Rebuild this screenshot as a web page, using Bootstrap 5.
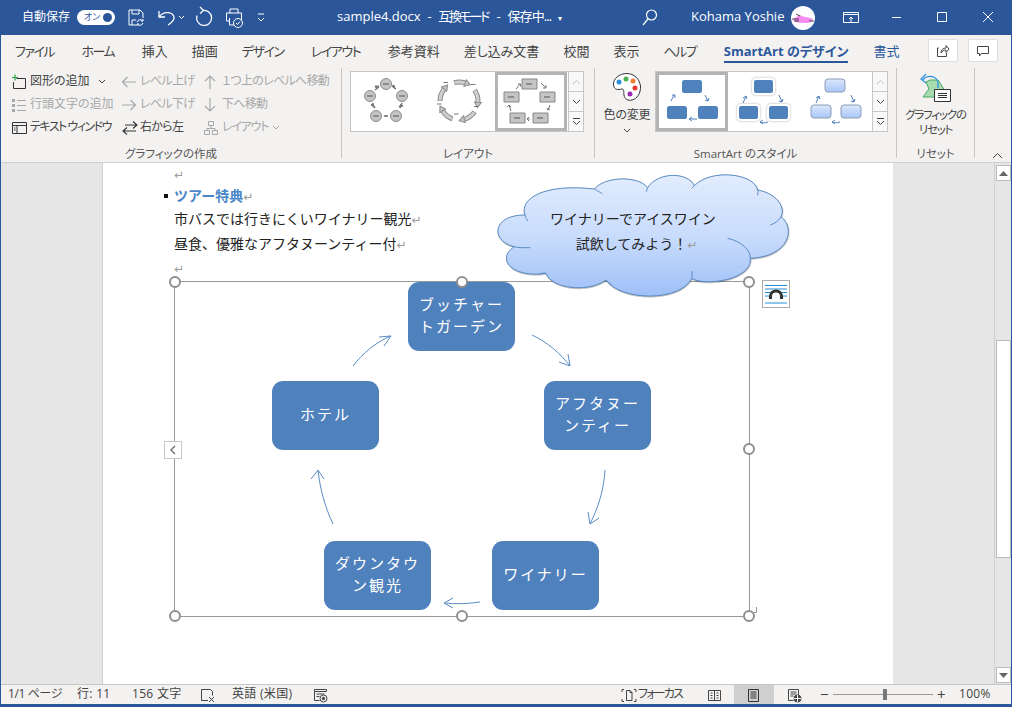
<!DOCTYPE html>
<html lang="ja">
<head>
  <meta charset="UTF-8" />
  <title>sample4.docx - Word</title>
  <link href="https://cdn.jsdelivr.net/npm/bootstrap@5.3.2/dist/css/bootstrap.min.css" rel="stylesheet">
  <style>
    html, body { height: 100%; overflow: hidden; }
    body { font-family: "Open Sans", "Noto Sans CJK JP", sans-serif; font-size: 12px; color: #444; background: #f3f2f1; font-feature-settings: "palt"; line-height: 1.2; }
    svg { display: block; flex: none; }
    .app-win { width: 1012px; height: 707px; border: solid #2b579a; border-width: 0 1px 3px 1px; }
    .kana-tight { letter-spacing: -.7px; }

    .title-bar { height: 35px; background: #2b579a; color: #fff; margin: 0 -1px; position: relative; }
    .autosave { margin-left: 22px; width: 55px; }
    .toggle-pill { width: 38px; height: 15px; border-radius: 8px; background: #fff; color: #2b579a; font-size: 9px; padding: 0 3px 0 7px; }
    .toggle-dot { width: 9px; height: 9px; border-radius: 50%; background: #2b579a; }
    .doc-title { position: absolute; left: 337px; top: 9px; font-size: 13px; white-space: nowrap; }
    .doc-title .title-mode { letter-spacing: -2.400px; margin-right: 2px; }
    .doc-title .title-jp { letter-spacing: -.9px; }
    .user-name { position: absolute; left: 691px; top: 9px; font-size: 13px; }
    .avatar { position: absolute; left: 791px; top: 6px; }
    .win-btn { position: absolute; top: 0; }

    .tab-row { height: 33px; padding-left: 14px; font-size: 13px; position: relative; color: #444; }
    .tab-item { margin-right: 24px; padding-top: 9px; white-space: nowrap; }
    .tab-kana { letter-spacing: -1.5px; margin-right: 27.5px; }
    .tab-active { color: #2b579a; font-weight: 700; height: 28px; border-bottom: 2px solid #2b579a; margin-right: 25px; }
    .tab-blue { color: #2b579a; }
    .top-btn { position: absolute; top: 4px; width: 30px; height: 23px; background: #fff; border: 1px solid #e1dfdd; border-radius: 2px; }

    .ribbon { height: 95px; border-bottom: 1px solid #d2d0ce; }
    .rb-group { height: 93px; position: relative; flex: none; }
    .rb-label { position: absolute; bottom: 0; left: 0; right: 0; text-align: center; font-size: 11.5px; color: #555; }
    .rb-sep { width: 1px; height: 90px; background: #c8c6c4; flex: none; }
    .cmd-row { height: 23px; white-space: nowrap; }
    .cmd-off { color: #a8a8a8; }
    .cmd-icon { width: 18px; margin-right: 1px; }
    .gallery { height: 61px; border: 1px solid #c6c6c6; background: #fff; position: absolute; top: 3px; }
    .gal-item { width: 72px; height: 59px; }
    .gal-on { border: 3px solid #b4b4b4; }
    .gal-scroll { width: 15px; border-left: 1px solid #c6c6c6; background: #f8f8f8; }
    .gal-btn { flex: 1 1 0; border-bottom: 1px solid #c6c6c6; }
    .gal-btn:last-child { border-bottom: 0; }

    .doc-area { height: 521px; background: #e6e6e6; }
    .doc-page { width: 791px; height: 521px; margin-left: 101px; background: #fff; border-left: 1px solid #d0d0d0; position: relative; padding-left: 71px; overflow: hidden; font-size: 14px; color: #222; font-feature-settings: normal; }
    .doc-line { line-height: 24.5px; white-space: nowrap; }
    .doc-first { height: 21px; line-height: 21px; }
    .doc-head-line { height: 23px; }
    .doc-body-line { height: 25px; }
    .doc-last { height: 24px; line-height: 21px; }
    .para-mark { color: #9a9a9a; font-family: "DejaVu Sans", sans-serif; font-size: 12px; }
    .doc-head { color: #4a86c8; font-weight: 700; }
    .doc-bullet { display: inline-block; width: 4px; height: 4px; background: #111; margin-left: -10px; margin-right: 6px; vertical-align: 3px; }

    .art-frame { width: 576px; height: 336px; border: 1px solid #999; position: relative; }
    .art-node { position: absolute; width: 107px; height: 69px; background: #4f81bd; border-radius: 11px; color: #fff; font-size: 15px; letter-spacing: 2px; line-height: 22px; text-align: center; padding: 0 8px 4px; }
    .art-arrows { position: absolute; left: -1px; top: -1px; }
    .art-handle { position: absolute; width: 12px; height: 12px; border-radius: 50%; background: #fff; border: 2px solid #8f8f8f; transform: translate(-50%, -50%); }
    .art-collapse { position: absolute; left: -11px; top: 159px; width: 18px; height: 18px; border: 1px solid #c8c8c8; background: #fff; }
    .art-end-mark { position: absolute; left: 575px; top: 325px; }
    .wrap-opt { position: absolute; left: 587px; top: -2px; width: 28px; height: 28px; border: 1px solid #aaa; background: #fff; }
    .cloud-box { position: absolute; left: 378px; top: 2px; width: 340px; height: 190px; }
    .cloud-text { position: absolute; left: 0; top: 42px; width: 304px; text-align: center; line-height: 24.5px; color: #222; }
    .cloud-second { margin-left: 7px; }

    .v-scroll { width: 17px; margin-left: 101px; background: #e6e6e6; border-left: 1px solid #d0d0d0; position: relative; }
    .v-btn { position: absolute; left: 1px; width: 15px; height: 16px; background: #fff; border: 1px solid #bbb; }
    .v-thumb { position: absolute; left: 1px; top: 177px; width: 15px; height: 218px; background: #fff; border: 1px solid #bbb; }

    .status-bar { height: 20px; border-top: 1px solid #c8c6c4; position: relative; color: #444; }
    .st-item { position: absolute; top: 2px; white-space: nowrap; }
    .st-wide { letter-spacing: .3px; }
    .st-big { font-size: 15px; top: 0; }
    .st-on { position: absolute; left: 733px; top: 0; width: 40px; height: 19px; background: #cfcfcf; }
    .zoom-track { position: absolute; left: 832px; top: 9px; width: 100px; height: 1px; background: #999; }
    .zoom-thumb { position: absolute; left: 882px; top: 4px; width: 4px; height: 11px; background: #777; }
  </style>
</head>
<body>
<div class="app-win d-flex flex-column">

  <!-- title bar -->
  <div class="title-bar d-flex align-items-center">
    <span class="autosave">自動保存</span>
    <div class="toggle-pill d-flex align-items-center justify-content-between"><span>オン</span><span class="toggle-dot"></span></div>
    <svg class="win-btn" style="left:127px" width="18" height="35" fill="none" stroke="#fff"><path d="M2 10h11l3 3v5M2 10v15h7M5 10v4h7v-4M5 25v-5h4"/><path d="M10 22a3.500 3.500 0 0 1 6-1M16 23a3.500 3.500 0 0 1-6 1M16 19v2h-2M10 26v-2h2"/></svg>
    <svg class="win-btn" style="left:157px" width="28" height="35" fill="none" stroke="#fff" stroke-width="1.300"><path d="M2 11v6h6M2 17c5-7 15-5 15 1 0 3-3 5-6 7"/><path d="M22 16l2.500 2.500 2.500-2.500" stroke-width="1"/></svg>
    <svg class="win-btn" style="left:195px" width="18" height="35" fill="none" stroke="#fff" stroke-width="1.300"><path d="M8 10.500A7.500 7.500 0 1 1 2 15.500M5 7l3.500 3.500-3.500 3"/></svg>
    <svg class="win-btn" style="left:225px" width="19" height="35" fill="none" stroke="#fff"><path d="M5 13V9h8v4M1.500 13h15v8h-3M1.500 13v8h3M4.500 18v7h5"/><circle cx="13" cy="23" r="4.500" fill="#2b579a"/><path d="M11 23l1.500 1.500 2.500-3"/></svg>
    <svg class="win-btn" style="left:256px" width="11" height="35" fill="none" stroke="#fff"><path d="M2 14h6M2 18l3 3 3-3"/></svg>
    <div class="doc-title">sample4.docx &nbsp;-&nbsp; <span class="title-mode">互換モード</span> &nbsp;-&nbsp; <span class="title-jp">保存中...</span> &nbsp;<span style="font-size:8px">▾</span></div>
    <svg class="win-btn" style="left:641px" width="18" height="35" fill="none" stroke="#fff" stroke-width="1.200"><circle cx="10.500" cy="15" r="5"/><path d="M7 19l-5 6"/></svg>
    <div class="user-name">Kohama Yoshie</div>
    <svg class="avatar" width="24" height="24"><circle cx="12" cy="12" r="12" fill="#fff"/><path d="M2 13c3-1 5-4 7-4 1 1 3 1 5 2 3 0 6 1 8 2-1 2-2 3-5 4-3 0-9 0-12-1-1 0-2-2-3-3z" fill="#f58cf0"/><path d="M1 13h7M3 15h5M5 8l4 2M18 15h5" stroke="#222" stroke-width=".8"/></svg>
    <svg class="win-btn" style="left:842px" width="19" height="35" fill="none" stroke="#fff"><path d="M1.500 12.500h15v10h-15zM1.500 14.500h15M9 22v-5M7 19l2-2 2 2"/></svg>
    <svg class="win-btn" style="left:890px" width="12" height="35" stroke="#fff"><path d="M2 17.500h9"/></svg>
    <svg class="win-btn" style="left:936px" width="12" height="35" fill="none" stroke="#fff"><path d="M1.500 12.500h9v9h-9z"/></svg>
    <svg class="win-btn" style="left:982px" width="12" height="35" stroke="#fff"><path d="M1 12l10 10M11 12L1 22"/></svg>
  </div>

  <!-- tabs -->
  <div class="tab-row d-flex">
    <span class="tab-item tab-kana">ファイル</span><span class="tab-item tab-kana">ホーム</span><span class="tab-item">挿入</span><span class="tab-item">描画</span><span class="tab-item tab-kana">デザイン</span><span class="tab-item tab-kana">レイアウト</span><span class="tab-item">参考資料</span><span class="tab-item">差し込み文書</span><span class="tab-item">校閲</span><span class="tab-item">表示</span><span class="tab-item tab-kana">ヘルプ</span><span class="tab-item tab-active">SmartArt のデザイン</span><span class="tab-item tab-blue">書式</span>
    <div class="top-btn d-flex align-items-center justify-content-center" style="left:927px"><svg width="14" height="14" fill="none" stroke="#444"><path d="M3 4H1.500v8.500h9V9M5 9c0-3 2-5 5-5V1.500L13 5l-3 3.500V6c-2 0-4 1-5 3z"/></svg></div>
    <div class="top-btn d-flex align-items-center justify-content-center" style="left:967px"><svg width="14" height="14" fill="none" stroke="#444"><path d="M1.500 2.500h11v7h-7l-2 2.500V9.500h-2z"/></svg></div>
  </div>

  <!-- ribbon -->
  <div class="ribbon d-flex">
    <div class="rb-group d-flex" style="width:340px;padding:2px 0 0 10px">
      <div style="width:110px">
        <div class="cmd-row d-flex align-items-center"><svg class="cmd-icon" height="16" fill="none"><path d="M5.500 4.500h9v10h-12V8" stroke="#333"/><path d="M4 .5v6M1 3.500h6" stroke="#2ea043" stroke-width="1.200"/></svg><span>図形の追加</span><svg class="ms-2" width="8" height="6" fill="none" stroke="#444"><path d="M1 1l3 3 3-3"/></svg></div>
        <div class="cmd-row d-flex align-items-center cmd-off"><svg class="cmd-icon" height="14" fill="#a8a8a8"><path d="M1 1h3v3H1zM1 6h3v3H1zM1 11h3v3H1zM6 2h9v1H6zM6 7h9v1H6zM6 12h9v1H6z"/></svg><span>行頭文字の追加</span></div>
        <div class="cmd-row d-flex align-items-center"><svg class="cmd-icon" height="14" fill="none" stroke="#333"><path d="M1.500 1.500h14v11h-14zM1.500 4.500h14M6 4.500v8"/><path d="M3 7h1.500M3 9h1.500" /></svg><span style="letter-spacing:-1.500px">テキスト&nbsp;ウィンドウ</span></div>
      </div>
      <div style="width:82px">
        <div class="cmd-row d-flex align-items-center cmd-off"><svg class="cmd-icon" height="14" fill="none" stroke="#a8a8a8" stroke-width="1.200"><path d="M15 7H1.500M6.500 2l-5 5 5 5"/></svg><span class="kana-tight">レベル上げ</span></div>
        <div class="cmd-row d-flex align-items-center cmd-off"><svg class="cmd-icon" height="14" fill="none" stroke="#a8a8a8" stroke-width="1.200"><path d="M1 7h13.500M9.500 2l5 5-5 5"/></svg><span class="kana-tight">レベル下げ</span></div>
        <div class="cmd-row d-flex align-items-center"><svg class="cmd-icon" height="16" fill="none" stroke="#333" stroke-width="1.100"><path d="M4 5h12M12 1.500L16 5l-4 3.500M15 11H2M6 7.500L2 11l4 3.500"/></svg><span class="kana-tight">右から左</span></div>
      </div>
      <div>
        <div class="cmd-row d-flex align-items-center cmd-off"><svg class="cmd-icon" height="16" width="14" fill="none" stroke="#a8a8a8" stroke-width="1.200"><path d="M7 15V2M2 7l5-5 5 5"/></svg><span class="kana-tight">１つ上のレベルへ移動</span></div>
        <div class="cmd-row d-flex align-items-center cmd-off"><svg class="cmd-icon" height="16" width="14" fill="none" stroke="#a8a8a8" stroke-width="1.200"><path d="M7 1v13M2 9l5 5 5-5"/></svg><span class="kana-tight">下へ移動</span></div>
        <div class="cmd-row d-flex align-items-center cmd-off"><svg class="cmd-icon" height="16" width="16" fill="none" stroke="#a8a8a8"><path d="M5.500 1.500h5v4h-5zM1.500 10.500h5v4h-5zM9.500 10.500h5v4h-5zM8 5.500v3M4 10.500v-2h8v2"/></svg><span style="letter-spacing:-1.200px">レイアウト</span><svg class="ms-1" width="8" height="6" fill="none" stroke="#a8a8a8"><path d="M1 1l3 3 3-3"/></svg></div>
      </div>
      <div class="rb-label">グラフィックの作成</div>
    </div>
    <div class="rb-sep"></div>

    <div class="rb-group" style="width:252px">
      <div class="gallery d-flex" style="left:8px;width:234px">
        <div class="gal-item">
          <svg width="72" height="59" stroke="#8c8c8c" fill="#c4c4c4">
            <circle cx="35" cy="12" r="5.500"/><circle cx="51" cy="24" r="5.500"/><circle cx="45" cy="44" r="5.500"/><circle cx="25" cy="44" r="5.500"/><circle cx="19" cy="24" r="5.500"/>
            <path d="M32 12h6M48 24h6M42 44h6M22 44h6M16 24h6" stroke="#555"/>
            <path d="M41 14l3 3-1-4zM50 32l-2 3 4-1zM34 44h2M20 33l3 2-1-4zM25 16l3-2-4 0z" stroke="#777" fill="#777"/>
            <path d="M41 14l4 3M51 31l-2 5M33 44h4M21 32l3 4M24 18l4-3" stroke="#777" stroke-width="1.500"/>
          </svg>
        </div>
        <div class="gal-item">
          <svg width="72" height="59" fill="none">
            <defs><marker id="blockHead" markerUnits="userSpaceOnUse" markerWidth="7" markerHeight="8" refX="1" refY="4" orient="auto"><path d="M.5 .5l5.500 3.500-5.500 3.500z" fill="#c4c4c4" stroke="#8c8c8c"/></marker></defs>
            <g stroke="#8c8c8c" stroke-width="5">
              <path d="M31.100 10.600A19 19 0 0 1 42.500 11.100"/>
              <path d="M51.600 18.100A19 19 0 0 1 54.900 30.700"/>
              <path d="M51.600 39.900A19 19 0 0 1 40.900 47.400"/>
              <path d="M29.500 46.900A19 19 0 0 1 19.500 38.500"/>
              <path d="M17 29A19 19 0 0 1 21.400 16.800"/>
            </g>
            <g stroke="#cfcfcf" stroke-width="3">
              <path d="M31.600 10.500A19 19 0 0 1 42.500 11.100" marker-end="url(#blockHead)"/>
              <path d="M51.900 18.600A19 19 0 0 1 54.900 30.700" marker-end="url(#blockHead)"/>
              <path d="M51.200 40.300A19 19 0 0 1 40.900 47.400" marker-end="url(#blockHead)"/>
              <path d="M29 46.700A19 19 0 0 1 19.500 38.500" marker-end="url(#blockHead)"/>
              <path d="M17 28.500A19 19 0 0 1 21.400 16.800" marker-end="url(#blockHead)"/>
            </g>
            <path d="M20.500 10.500h4.500M48 12.500h4.500M51 34.500h4.500M31 42h4.500M14 32h4.500" stroke="#777"/>
          </svg>
        </div>
        <div class="gal-item gal-on">
          <svg width="66" height="53" stroke="#888" fill="#c4c4c4">
            <path d="M24 4h15v10H24zM42 17h15v10H42zM35 38h15v10H35zM12 38h15v10H12zM6 17h15v10H6z"/>
            <path d="M28 9h6M46 22h6M39 43h6M16 43h6M10 22h6" stroke="#555"/>
            <path d="M18 14l4-5M20 9h2.500v2.500M43 8l5 5M48 10v3h-3M52 30l-2 5M49 33l1 2 2-1M32 44h-3M31 42l-2 2 2 2M13 36l-2-6M9 32l2-2 2 2" fill="none" stroke="#777"/>
          </svg>
        </div>
        <div class="gal-scroll d-flex flex-column ms-auto">
          <div class="gal-btn d-flex align-items-center justify-content-center"><svg width="9" height="6" fill="none" stroke="#c0c0c0"><path d="M1 5l3.500-3.500L8 5"/></svg></div>
          <div class="gal-btn d-flex align-items-center justify-content-center"><svg width="9" height="6" fill="none" stroke="#444"><path d="M1 1l3.500 3.500L8 1"/></svg></div>
          <div class="gal-btn d-flex align-items-center justify-content-center"><svg width="9" height="8" fill="none" stroke="#444"><path d="M1 .5h7M1 3l3.500 3.500L8 3"/></svg></div>
        </div>
      </div>
      <div class="rb-label">レイアウト</div>
    </div>
    <div class="rb-sep"></div>

    <div class="rb-group" style="width:301px">
      <div class="text-center" style="position:absolute;left:7px;top:4px;width:50px">
        <svg class="mx-auto" width="30" height="30" fill="#fff" stroke="#333"><path d="M15 1.500C7 1.500 1 7 1.500 13c.5 5 5 5 8 4 3-.5 2 3 2.500 6 .5 4 4 6 8 5 5-1 9-7 8.500-14C27.500 7 22 1.500 15 1.500z"/><circle cx="7" cy="10" r="2.500" fill="#2a8fd8" stroke="none"/><circle cx="14" cy="7" r="2.500" fill="#4caf50" stroke="none"/><circle cx="21" cy="9" r="2.500" fill="#ed7d31" stroke="none"/><circle cx="23" cy="16" r="2.500" fill="#e53935" stroke="none"/><circle cx="18" cy="22" r="2.500" fill="#9c27b0" stroke="none"/></svg>
        <div style="font-size:12px;white-space:nowrap;margin-top:6px;letter-spacing:-.2px">色の変更</div>
        <svg class="mx-auto" style="margin-top:6px" width="8" height="6" fill="none" stroke="#444"><path d="M1 1l3 3 3-3"/></svg>
      </div>
      <div class="gallery d-flex" style="left:60px;width:233px">
        <div class="gal-item gal-on">
          <svg width="66" height="53" fill="#4f81bd">
            <rect x="23" y="5" width="20" height="13" rx="2.500"/><rect x="39" y="31" width="20" height="13" rx="2.500"/><rect x="8" y="31" width="20" height="13" rx="2.500"/>
            <path d="M12 26l3-6M13 20h3v3M46 20l3 6M50 23l-1 3-3-1M38 44h-8M33 42l-3 2 3 2" fill="none" stroke="#4f81bd"/>
          </svg>
        </div>
        <div class="gal-item">
          <svg width="72" height="59" fill="#4f81bd">
            <g stroke="#fff" stroke-width="2" style="filter:drop-shadow(0 0 1px #aaa)"><rect x="25" y="7" width="21" height="15" rx="3"/><rect x="40" y="33" width="21" height="15" rx="3"/><rect x="10" y="33" width="21" height="15" rx="3"/></g>
            <path d="M15 31l3-7M15 26l3-2 1 3M51 23l3 7M55 27l-1 3-3-1M40 50c-3 1-6 1-8 0M35 48l-3 2 3 2" fill="none" stroke="#4f81bd"/>
          </svg>
        </div>
        <div class="gal-item">
          <svg width="72" height="59">
            <defs><linearGradient id="softBlue" x1="0" y1="0" x2="0" y2="1"><stop offset="0" stop-color="#dbe7fd"/><stop offset="1" stop-color="#a9c6f9"/></linearGradient></defs>
            <g fill="url(#softBlue)" stroke="#8d9db5"><rect x="25" y="7" width="20" height="13" rx="3"/><rect x="41" y="33" width="20" height="13" rx="3"/><rect x="11" y="33" width="20" height="13" rx="3"/></g>
            <path d="M16 31l3-7M16 26l3-2 1 3M51 23l3 7M55 27l-1 3-3-1M40 50c-3 1-6 1-8 0M35 48l-3 2 3 2" fill="none" stroke="#4f81bd"/>
          </svg>
        </div>
        <div class="gal-scroll d-flex flex-column ms-auto">
          <div class="gal-btn d-flex align-items-center justify-content-center"><svg width="9" height="6" fill="none" stroke="#c0c0c0"><path d="M1 5l3.500-3.500L8 5"/></svg></div>
          <div class="gal-btn d-flex align-items-center justify-content-center"><svg width="9" height="6" fill="none" stroke="#444"><path d="M1 1l3.500 3.500L8 1"/></svg></div>
          <div class="gal-btn d-flex align-items-center justify-content-center"><svg width="9" height="8" fill="none" stroke="#444"><path d="M1 .5h7M1 3l3.500 3.500L8 3"/></svg></div>
        </div>
      </div>
      <div class="rb-label">SmartArt のスタイル</div>
    </div>
    <div class="rb-sep"></div>

    <div class="rb-group" style="width:77px">
      <svg class="mx-auto" style="margin-top:4px" width="36" height="32" fill="none">
        <path d="M5 25l6-8-3-7 4-2h8l11 17z" fill="#a8dcae" stroke="#4aa564"/>
        <path d="M5 8a8 7 0 0 1 15 4v4" stroke="#2f8fdc" stroke-width="1.300"/><path d="M8 2L3 7l5 4" stroke="#2f8fdc" stroke-width="1.300"/>
        <path d="M16.500 17.500h16v12h-16z" fill="#fff" stroke="#333"/><path d="M20 21.500h9M20 23.500h9M20 25.500h9" stroke="#333"/>
      </svg>
      <div class="text-center" style="font-size:11.500px;line-height:15px;margin-top:3px;letter-spacing:-1.200px">グラフィックの<br>リセット</div>
      <div class="rb-label">リセット</div>
    </div>
    <div class="rb-sep"></div>
    <svg class="ms-auto" style="margin:84px 8px 0 0" width="11" height="7" fill="none" stroke="#444"><path d="M1 6l4.500-4.500L10 6"/></svg>
  </div>

  <!-- document -->
  <div class="doc-area d-flex">
    <div class="doc-page flex-none">
      <div class="doc-line doc-first"><span class="para-mark">↵</span></div>
      <div class="doc-line doc-head-line"><span class="doc-bullet"></span><span class="doc-head">ツアー特典</span><span class="para-mark">↵</span></div>
      <div class="doc-line doc-body-line">市バスでは行きにくいワイナリー観光<span class="para-mark">↵</span></div>
      <div class="doc-line doc-body-line">昼食、優雅なアフタヌーンティー付<span class="para-mark">↵</span></div>
      <div class="doc-line doc-last"><span class="para-mark">↵</span></div>

      <div class="art-frame">
        <div class="art-node d-flex align-items-center justify-content-center" style="left:233px;top:0">ブッチャートガーデン</div>
        <div class="art-node d-flex align-items-center justify-content-center" style="left:369px;top:99px">アフタヌーンティー</div>
        <div class="art-node d-flex align-items-center justify-content-center" style="left:317px;top:259px">ワイナリー</div>
        <div class="art-node d-flex align-items-center justify-content-center" style="left:149px;top:259px">ダウンタウン観光</div>
        <div class="art-node d-flex align-items-center justify-content-center" style="left:97px;top:99px">ホテル</div>
        <svg class="art-arrows" width="576" height="335" fill="none" stroke="#5b8cc4">
          <path d="M179 85c10-13 23-24 38-30M205 56l12-1-7 10"/>
          <path d="M358 54c15 7 28 18 38 31M394 73l2 12-11-4"/>
          <path d="M431 189c-1 20-7 38-15 54M414 231l2 12 9-6"/>
          <path d="M306 321c-13 2-25 2-36 1M279 317l-9 5 9 5"/>
          <path d="M159 243c-8-17-13-35-15-54M137 198l7-9 6 9"/>
        </svg>
        <span class="art-handle" style="left:0;top:0"></span>
        <span class="art-handle" style="left:50%;top:0"></span>
        <span class="art-handle" style="left:100%;top:0"></span>
        <span class="art-handle" style="left:100%;top:50%"></span>
        <span class="art-handle" style="left:100%;top:100%"></span>
        <span class="art-handle" style="left:50%;top:100%"></span>
        <span class="art-handle" style="left:0;top:100%"></span>
        <div class="art-collapse d-flex align-items-center justify-content-center"><svg width="8" height="10" fill="none" stroke="#777" stroke-width="1.500"><path d="M6 1L2 5l4 4"/></svg></div>
        <svg class="art-end-mark" width="8" height="7" fill="none" stroke="#999"><path d="M6.500 0v5.500H1"/></svg>
        <div class="wrap-opt d-flex align-items-center justify-content-center">
          <svg width="24" height="24" fill="none"><path d="M1 3.500h22M1 7h22M1 10.500h5M18 10.500h5M1 14h4M19 14h4M1 21h22" stroke="#1f8fd6"/><path d="M6.500 17v-3a5.500 5 0 0 1 11 0v3" stroke="#333" stroke-width="3"/></svg>
        </div>
      </div>

      <div class="cloud-box">
        <svg width="340" height="190" viewBox="0 0 1020 570" style="overflow:visible">
          <defs><linearGradient id="cloudFill" x1="0" y1="0" x2="0" y2="1"><stop offset="0" stop-color="#e2ecfe"/><stop offset=".5" stop-color="#c9dcfc"/><stop offset="1" stop-color="#9fc0f8"/></linearGradient></defs>
          <path style="filter:drop-shadow(1px 2px 2px rgba(0,0,0,.35))" d="M132 150C115 100 190 55 340 72C370 35 470 30 500 68C530 20 620 20 640 62C690 10 820 25 830 75C885 85 915 125 900 155C945 190 925 275 808 280C815 345 670 365 632 340C600 410 420 410 375 345C320 385 210 370 195 325C90 340 45 280 100 245C30 230 30 150 132 150Z" fill="url(#cloudFill)" stroke="#5b8cc4" stroke-width="3"/>
          <path d="M132 150c2 8 6 14 8 18M340 72c8 5 18 10 24 14M500 68c-2 6-4 10-4 12M640 62c-3 4-6 6-8 8M830 75c2 6 0 10 0 16M900 155c-6 12-18 20-32 25M808 280c0-25-25-50-68-60M632 340c2-8 2-14 0-22M375 345c6 6 10 10 16 14M195 325c-6-2-14 0-20 2M100 245c14 4 30 3 48 3" fill="none" stroke="#5b8cc4" stroke-width="3"/>
        </svg>
        <div class="cloud-text">ワイナリーでアイスワイン<br><span class="cloud-second">試飲してみよう！<span class="para-mark">↵</span></span></div>
      </div>
    </div>
    <div class="v-scroll">
      <div class="v-btn d-flex align-items-center justify-content-center" style="top:2px"><svg width="9" height="5" fill="#666"><path d="M0 5l4.500-5L9 5z"/></svg></div>
      <div class="v-thumb"></div>
      <div class="v-btn d-flex align-items-center justify-content-center" style="top:504px"><svg width="9" height="5" fill="#666"><path d="M0 0l4.500 5L9 0z"/></svg></div>
    </div>
  </div>

  <!-- status bar -->
  <div class="status-bar">
    <span class="st-item" style="left:7px;letter-spacing:-.4px">1/1 ページ</span>
    <span class="st-item st-wide" style="left:76px">行: 11</span>
    <span class="st-item st-wide" style="left:131px">156 文字</span>
    <svg class="st-item" style="left:199px;top:3px" width="15" height="15" fill="none" stroke="#444"><path d="M8 12.500H1.500v-11h9l2 2v4M9 9l5 5M14 9l-5 5"/></svg>
    <span class="st-item st-wide" style="left:231px">英語 (米国)</span>
    <svg class="st-item" style="left:312px;top:3px" width="15" height="15" fill="none" stroke="#444"><path d="M1.500 1.500h12v2h-12zM1.500 3.500v9h5M3.500 6h8M3.500 8.500h3"/><circle cx="10.500" cy="10.500" r="3.500"/><circle cx="10.500" cy="10.500" r="1.200" fill="#444"/></svg>
    <svg class="st-item" style="left:620px;top:3px" width="16" height="15" fill="none" stroke="#444"><path d="M1 4V1.500h2M13 1.500h2V4M1 11v2.500h2M13 13.500h2V11M5.500 12.500v-10h3.500l2 2v8zM9 2.500v2h2"/></svg>
    <span class="st-item" style="left:637px;letter-spacing:-1.800px">フォーカス</span>
    <svg class="st-item" style="left:706px;top:3px" width="15" height="15" fill="none" stroke="#444"><path d="M1.500 2.500h12v10h-12zM7.500 2.500v10M3.500 5h2M3.500 7.500h2M3.500 10h2M9.500 5h2M9.500 7.500h2M9.500 10h2"/></svg>
    <div class="st-on"></div>
    <svg class="st-item" style="left:746px;top:3px" width="14" height="15" fill="none" stroke="#333"><path d="M1.500 1.500h10v12h-10zM3.500 4h6M3.500 6h6M3.500 8h6M3.500 10h6"/></svg>
    <svg class="st-item" style="left:786px;top:3px" width="15" height="15" fill="none" stroke="#444"><path d="M1.500 1.500h10v6M1.500 1.500v11h5M3.500 4h6M3.500 6h6M3.500 8h3"/><circle cx="10.500" cy="10.500" r="3.500" fill="#444"/><path d="M7 10.500h7M10.500 7v7" stroke="#f3f2f1"/></svg>
    <span class="st-item st-big" style="left:819px">−</span>
    <div class="zoom-track"></div>
    <div class="zoom-thumb"></div>
    <span class="st-item st-big" style="left:936px">+</span>
    <span class="st-item st-wide" style="left:958px">100%</span>
  </div>
</div>
</body>
</html>
